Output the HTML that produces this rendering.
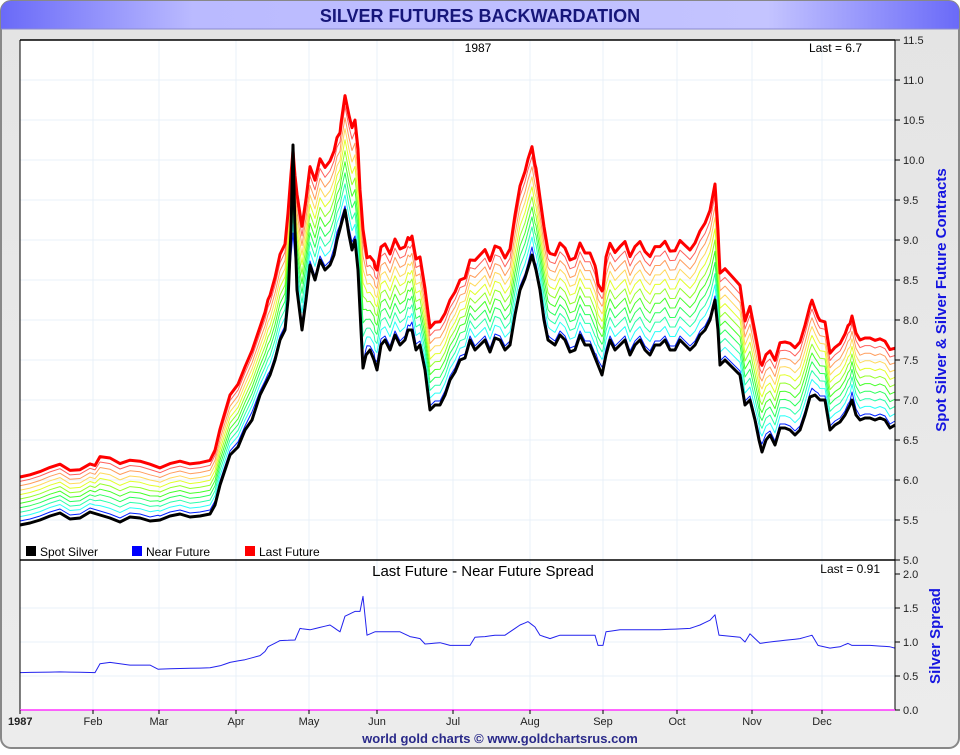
<!DOCTYPE html>
<html><head><meta charset="utf-8"><style>
html,body{margin:0;padding:0;background:#fff;}
body{width:960px;height:750px;overflow:hidden;font-family:"Liberation Sans",sans-serif;}
</style></head><body>
<svg id="s" width="960" height="750" xmlns="http://www.w3.org/2000/svg" font-family="Liberation Sans, sans-serif">
<defs>
<linearGradient id="tg" x1="0" x2="1" y1="0" y2="0">
<stop offset="0" stop-color="#6a6af8"/><stop offset="0.2" stop-color="#babaff"/><stop offset="0.8" stop-color="#c4c4ff"/><stop offset="1" stop-color="#6a6af8"/></linearGradient>
<linearGradient id="bg" x1="0" x2="0" y1="0" y2="1"><stop offset="0" stop-color="#e4e4e4"/><stop offset="1" stop-color="#ececec"/></linearGradient>
</defs>
<rect x="1" y="1" width="958" height="747" rx="10" fill="url(#bg)" stroke="#888" stroke-width="2"/>
<path d="M1 29 V11 A10 10 0 0 1 11 1 H949 A10 10 0 0 1 959 11 V29 Z" fill="url(#tg)"/>
<line x1="1" y1="29" x2="959" y2="29" stroke="#8a8ad0"/>
<text x="480" y="22" text-anchor="middle" font-size="18" font-weight="bold" fill="#16167a">SILVER FUTURES BACKWARDATION</text>
<rect x="20" y="40" width="875" height="670" fill="#fff"/>
<g id="grid" stroke="#e8f1f9" stroke-width="1"></g>
<g id="lines" fill="none" stroke-linejoin="round"></g>
<line x1="20" y1="40" x2="895" y2="40" stroke="#000" stroke-width="1.5"/>
<line x1="20" y1="560" x2="895" y2="560" stroke="#000" stroke-width="1.5"/>
<line x1="20" y1="40" x2="20" y2="710" stroke="#000" stroke-width="1"/>
<line x1="895" y1="40" x2="895" y2="710" stroke="#000" stroke-width="1"/>
<line x1="20" y1="710" x2="895" y2="710" stroke="#ff33ff" stroke-width="1.5"/>
<g id="ax" font-size="11" fill="#222"></g>
<text x="478" y="52" text-anchor="middle" font-size="12">1987</text>
<text x="862" y="52" text-anchor="end" font-size="12">Last = 6.7</text>
<text x="483" y="576" text-anchor="middle" font-size="15">Last Future - Near Future Spread</text>
<text x="880" y="573" text-anchor="end" font-size="12">Last = 0.91</text>
<rect x="26" y="546" width="10" height="10" fill="#000"/><text x="40" y="556" font-size="12">Spot Silver</text>
<rect x="132" y="546" width="10" height="10" fill="#0000ff"/><text x="146" y="556" font-size="12">Near Future</text>
<rect x="245" y="546" width="10" height="10" fill="#ff0000"/><text x="259" y="556" font-size="12">Last Future</text>
<text transform="translate(946,300) rotate(-90)" text-anchor="middle" font-size="15" font-weight="bold" fill="#1515e0">Spot Silver &amp; Silver Future Contracts</text>
<text transform="translate(940,636) rotate(-90)" text-anchor="middle" font-size="15" font-weight="bold" fill="#1515e0">Silver Spread</text>
<text x="500" y="743" text-anchor="middle" font-size="13" font-weight="bold" fill="#2a2a8a">world gold charts © www.goldchartsrus.com</text>
</svg>
<script>
var NS="http://www.w3.org/2000/svg";
function el(t,a,p){var e=document.createElementNS(NS,t);for(var k in a)e.setAttribute(k,a[k]);p.appendChild(e);return e;}
var grid=document.getElementById('grid'),ax=document.getElementById('ax'),L=document.getElementById('lines');
var months=[[20,"1987"],[93,"Feb"],[159,"Mar"],[236,"Apr"],[309,"May"],[377,"Jun"],[453,"Jul"],[530,"Aug"],[603,"Sep"],[677,"Oct"],[752,"Nov"],[822,"Dec"]];
months.forEach(function(m,i){if(i>0)el('line',{x1:m[0],x2:m[0],y1:40,y2:710},grid);
var t=el('text',{x:i==0?8:m[0],y:725,'text-anchor':i==0?'start':'middle','font-weight':i==0?'bold':'normal'},ax);t.textContent=m[1];
el('line',{x1:m[0],x2:m[0],y1:710,y2:714,stroke:'#000'},ax);});
for(var v=5;v<=11.5;v+=0.5){var y=560-(v-5)*80;if(v>5&&v<11.5)el('line',{x1:20,x2:895,y1:y,y2:y},grid);
el('line',{x1:895,x2:900,y1:y,y2:y,stroke:'#000'},ax);var t=el('text',{x:903,y:y+4},ax);t.textContent=v.toFixed(1);}
for(var v=0;v<=2;v+=0.5){var y=710-v*68;if(v>0&&v<2)el('line',{x1:20,x2:895,y1:y,y2:y},grid);
el('line',{x1:895,x2:900,y1:y,y2:y,stroke:'#000'},ax);var t=el('text',{x:903,y:y+4},ax);t.textContent=v.toFixed(1);}
var sp=[[20,525],[30,523],[40,520],[50,516],[60,513],[70,519],[80,518],[90,512],[100,515],[110,518],[120,522],[130,517],[140,518],[150,521],[160,520],[170,516],[180,514],[190,517],[200,516],[210,514],[215,505],[220,485],[225,470],[230,455],[238,447],[245,430],[252,420],[260,395],[265,385],[270,375],[275,360],[280,340],[285,330],[288,300],[291,230],[293,145],[295,230],[297,290],[302,330],[306,300],[310,265],[315,280],[320,260],[325,270],[330,265],[334,255],[337,240],[341,225],[345,210],[349,235],[352,250],[355,240],[358,270],[361,330],[363,368],[366,355],[370,350],[374,360],[377,370],[381,345],[385,340],[390,350],[395,335],[400,345],[405,340],[408,330],[412,330],[416,350],[420,345],[425,370],[430,410],[435,405],[440,405],[445,395],[450,380],[455,372],[460,360],[465,358],[470,340],[475,350],[480,345],[485,340],[490,352],[495,338],[500,340],[505,350],[510,345],[515,315],[520,290],[525,278],[532,255],[536,270],[540,290],[544,320],[548,340],[555,345],[560,335],[565,340],[570,352],[575,350],[580,335],[585,345],[590,345],[596,360],[602,375],[606,355],[610,340],[615,350],[620,345],[625,340],[630,355],[635,345],[640,340],[645,350],[650,355],[655,345],[660,345],[665,340],[670,350],[675,350],[680,340],[685,345],[690,350],[695,345],[700,335],[705,330],[710,320],[715,300],[718,330],[720,365],[725,360],[730,365],[735,370],[740,375],[745,405],[750,400],[755,420],[759,440],[762,452],[766,440],[770,435],[775,445],[780,428],[785,428],[790,430],[795,435],[800,430],[805,415],[810,397],[815,395],[820,400],[825,400],[830,430],[835,425],[840,422],[845,415],[850,405],[852,400],[856,415],[860,420],[865,418],[870,418],[875,420],[880,418],[885,420],[890,428],[895,425]];
var base={291:262,293:238,295:262};
var sd=[[20,.55],[60,.56],[95,.55],[100,.68],[110,.7],[130,.66],[150,.66],[158,.6],[180,.61],[210,.62],[220,.65],[230,.7],[245,.74],[260,.8],[265,.86],[268,.93],[280,1.02],[295,1.03],[300,1.2],[310,1.18],[330,1.25],[340,1.15],[345,1.38],[355,1.45],[360,1.45],[363,1.67],[367,1.1],[375,1.15],[400,1.15],[410,1.08],[420,1.05],[425,0.97],[440,0.99],[450,0.95],[470,0.95],[475,1.07],[485,1.08],[495,1.1],[505,1.1],[520,1.25],[528,1.3],[535,1.22],[540,1.1],[550,1.05],[560,1.1],[580,1.1],[595,1.1],[598,0.95],[603,0.95],[606,1.15],[620,1.18],[640,1.18],[660,1.18],[690,1.2],[700,1.25],[710,1.32],[715,1.4],[719,1.1],[740,1.07],[745,1.0],[750,1.12],[760,0.98],[770,1.0],[800,1.05],[812,1.1],[818,0.95],[830,0.91],[840,0.93],[848,0.98],[852,0.95],[870,0.95],[890,0.93],[895,0.91]];
function interp(a,x){for(var i=1;i<a.length;i++){if(x<=a[i][0]){var t=(x-a[i-1][0])/(a[i][0]-a[i-1][0]);return a[i-1][1]+t*(a[i][1]-a[i-1][1]);}}return a[a.length-1][1];}
var xs=sp.map(function(p){return p[0];});
sd.forEach(function(p){if(xs.indexOf(p[0])<0)xs.push(p[0]);});xs.sort(function(a,b){return a-b;});
function line(k,col,w){var pts=xs.map(function(x){var y=(base[x]!==undefined)?base[x]:interp(sp,x);var near=y-4-((x*7)%5);var s=interp(sd,x)*80;return x+','+(near-s*k/10).toFixed(1);});
el('polyline',{points:pts.join(' '),stroke:col,'stroke-width':w},L);}
for(var k=9;k>=1;k--){var h=(200-220*k/10+360)%360;line(k,'hsl('+h+',100%,'+(k>6?68:58)+'%)',1);}
line(0,'#0022ff',1);
line(10,'#ff0000',3);
el('polyline',{points:xs.map(function(x){return x+','+interp(sp,x).toFixed(1);}).join(' '),stroke:'#000','stroke-width':3},L);
el('polyline',{points:xs.map(function(x){return x+','+(710-interp(sd,x)*68).toFixed(1);}).join(' '),stroke:'#2222ee','stroke-width':1},L);
</script>
</body></html>
